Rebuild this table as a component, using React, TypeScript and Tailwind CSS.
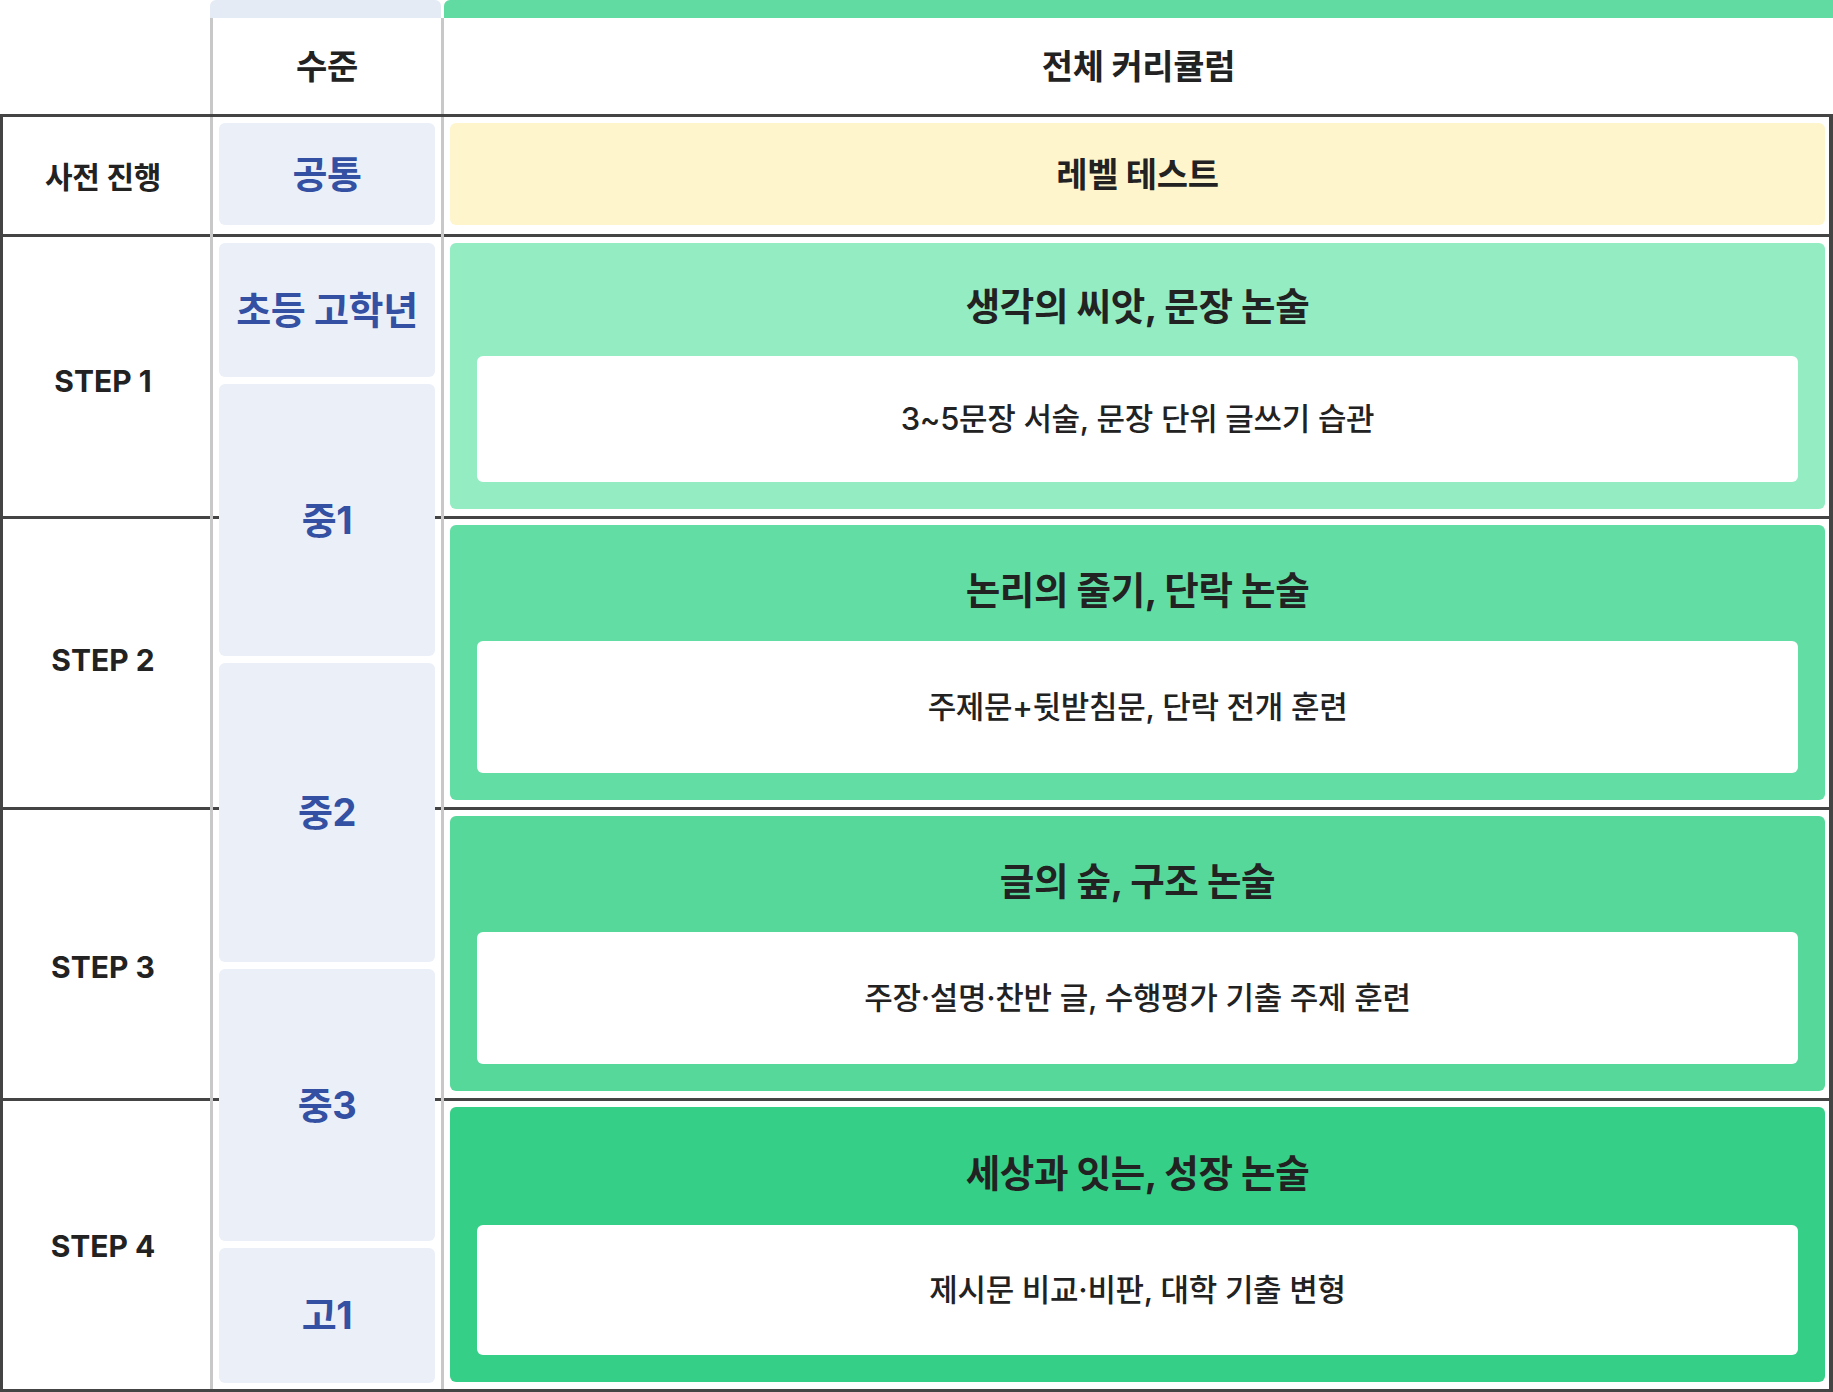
const FONT = "font-['Inter','Noto_Sans_CJK_KR',sans-serif]";

const steps = [
  {
    step: "STEP 1",
    title: "생각의 씨앗, 문장 논술",
    desc: "3~5문장 서술, 문장 단위 글쓰기 습관",
    bg: "bg-[#93ecc2]",
    box: "h-[126px]",
    label: "pt-[10px]",
  },
  {
    step: "STEP 2",
    title: "논리의 줄기, 단락 논술",
    desc: "주제문+뒷받침문, 단락 전개 훈련",
    bg: "bg-[#62dea4]",
    box: "h-[132px]",
    label: "pb-[5px]",
  },
  {
    step: "STEP 3",
    title: "글의 숲, 구조 논술",
    desc: "주장·설명·찬반 글, 수행평가 기출 주제 훈련",
    bg: "bg-[#56d89b]",
    box: "h-[132px]",
    label: "pt-[26px]",
  },
  {
    step: "STEP 4",
    title: "세상과 잇는, 성장 논술",
    desc: "제시문 비교·비판, 대학 기출 변형",
    bg: "bg-[#36cf87]",
    box: "h-[130px]",
    label: "pt-[2px]",
  },
];

// grid row placement written out so tailwind picks them up
const rowStart = ["row-start-2", "row-start-3", "row-start-4", "row-start-5"];

export default function App() {
  return (
    <div className={`w-[1833px] bg-white text-[#222] ${FONT}`}>
      {/* header */}
      <div className="grid grid-cols-[210px_234px_1fr]">
        <div />
        <div className="flex flex-col">
          <div className="h-[18px] mr-[3px] rounded-t-[6px] bg-[#e4ebf5]" />
          <div className="h-[96px] border-x-[3px] border-[#c8c8c8] flex items-center justify-center text-[34px] font-bold tracking-[-0.01em]">
            수준
          </div>
        </div>
        <div className="flex flex-col">
          <div className="h-[18px] rounded-tl-[6px] bg-[#62dba2]" />
          <div className="h-[96px] flex items-center justify-center text-[34px] font-bold tracking-[-0.01em]">
            전체 커리큘럼
          </div>
        </div>
      </div>

      {/* body */}
      <div className="grid grid-cols-[207px_234px_1fr] grid-rows-[120px_282px_291px_291px_288px] border-[#444] border-t-[3px] border-l-[3px] border-b-[3px] border-r-[4px]">
        {/* pre row */}
        <div className="col-start-1 row-start-1 border-b-[3px] border-[#444] pr-[7px] pt-[3px] flex items-center justify-center text-[30px] font-bold tracking-[-0.01em]">
          사전 진행
        </div>
        <div className="col-start-2 row-start-1 border-b-[3px] border-[#444]" />
        <div className="col-start-3 row-start-1 border-b-[3px] border-[#444] pl-[6px] pr-[4px] pt-[6px] pb-[9px] flex">
          <div className="flex-1 rounded-[6px] bg-[#fef5cd] flex items-center justify-center text-[34px] font-bold tracking-[-0.01em]">
            레벨 테스트
          </div>
        </div>

        {steps.map((s, i) => (
          <Row key={s.step} s={s} row={rowStart[i]} last={i === steps.length - 1} />
        ))}

        {/* level column, sits over the row lines */}
        <div className="col-start-2 row-start-1 row-span-5 relative z-10 border-x-[3px] border-[#c8c8c8] px-[6px] pt-[6px] pb-[6px] flex flex-col text-[38px] font-bold tracking-[-0.01em] text-[#3350a3]">
          <Level className="h-[102px]">공통</Level>
          <Level className="h-[134px] mt-[18px]">초등 고학년</Level>
          <Level className="h-[272px] mt-[7px]">중1</Level>
          <Level className="h-[299px] mt-[7px]">중2</Level>
          <Level className="h-[272px] mt-[7px]">중3</Level>
          <Level className="flex-1 mt-[7px]">고1</Level>
        </div>
      </div>
    </div>
  );
}

function Level({ className, children }: { className: string; children: React.ReactNode }) {
  return (
    <div className={`${className} rounded-[6px] bg-[#ebf0f8] flex items-center justify-center`}>
      {children}
    </div>
  );
}

function Row({ s, row, last }: { s: (typeof steps)[number]; row: string; last: boolean }) {
  const line = last ? "" : "border-b-[3px] border-[#444]";
  return (
    <>
      <div className={`col-start-1 ${row} ${line} ${s.label} pr-[7px] flex items-center justify-center text-[30px] font-bold`}>
        {s.step}
      </div>
      <div className={`col-start-2 ${row} ${line}`} />
      <div className={`col-start-3 ${row} ${line} pl-[6px] pr-[4px] pt-[6px] pb-[7px] flex`}>
        <div className={`flex-1 rounded-[6px] ${s.bg} px-[27px] pb-[27px] flex flex-col`}>
          <div className="flex-1 pt-[16px] flex items-center justify-center text-[37.5px] font-bold tracking-[-0.01em]">
            {s.title}
          </div>
          <div className={`${s.box} rounded-[6px] bg-white flex items-center justify-center text-[31px] font-medium tracking-[-0.01em]`}>
            {s.desc}
          </div>
        </div>
      </div>
    </>
  );
}
